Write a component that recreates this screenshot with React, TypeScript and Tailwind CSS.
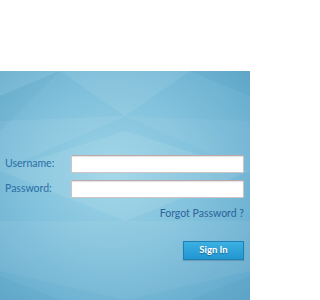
import { FC } from "react";

const Diamonds: FC = () => (
  <svg
    className="absolute inset-0 h-full w-full"
    viewBox="0 0 250 229"
    preserveAspectRatio="none"
  >
    <g fill="#ffffff">
      <polygon points="0,0 60,0 0,25" opacity="0.06" />
      <polygon points="60,0 190,0 125,45" opacity="0.08" />
      <polygon points="0,50 125,45 0,100" opacity="0.07" />
      <polygon points="125,45 250,50 250,100" opacity="0.05" />
      <polygon points="0,100 125,60 250,100 125,150" opacity="0.09" />
      <polygon points="0,150 125,150 0,200" opacity="0.06" />
      <polygon points="125,150 250,150 250,200" opacity="0.06" />
      <polygon points="0,200 125,150 250,200 125,229" opacity="0.05" />
    </g>
    <g fill="#2a6f9e">
      <polygon points="190,0 250,0 250,25" opacity="0.08" />
      <polygon points="0,25 60,0 0,60" opacity="0.06" />
      <polygon points="0,229 60,229 0,205" opacity="0.06" />
      <polygon points="250,229 190,229 250,205" opacity="0.06" />
    </g>
  </svg>
);

const Field: FC<{ label: string; type: string }> = ({ label, type }) => (
  <div className="flex items-center">
    <label className="w-[71px] shrink-0 pl-[5px] text-[10.5px] text-[#2b6ea6]">
      {label}
    </label>
    <input
      type={type}
      className="h-[18px] w-[173px] rounded-[2px] border border-[#cfc4c4] border-t-[#bda9a9] bg-white shadow-[inset_0_1px_1px_rgba(0,0,0,0.12)] outline-none"
    />
  </div>
);

export default function App() {
  return (
    <div
      className="flex h-[300px] w-[250px] flex-col bg-white"
      style={{ fontFamily: 'Lato, "Liberation Sans", sans-serif' }}
    >
      <div className="h-[71px]" />
      <div className="relative flex-1 overflow-hidden bg-[radial-gradient(ellipse_at_45%_45%,#9cd4e7_0%,#82c2dc_45%,#5fa6ca_100%)]">
        <Diamonds />
        <div className="relative flex flex-col pt-[84px] pr-[6px]">
          <div className="flex flex-col gap-[7px]">
            <Field label="Username:" type="text" />
            <Field label="Password:" type="password" />
          </div>
          <div className="mt-[8px] text-right text-[10.5px] leading-[14px] text-[#2c6399]">
            Forgot Password ?
          </div>
          <div className="mt-[21px] flex justify-end">
            <button className="h-[19px] w-[61px] border border-[#1f80b4] bg-[linear-gradient(#3cb0e2,#2196d1)] text-[9.5px] font-bold text-white [text-shadow:0_1px_1px_rgba(0,0,0,0.35)] shadow-[0_1px_1px_rgba(0,0,0,0.15)]">
              Sign In
            </button>
          </div>
        </div>
      </div>
    </div>
  );
}
